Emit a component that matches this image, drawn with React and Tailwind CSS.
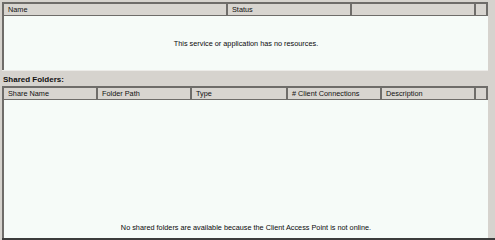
import React from "react";

const topColumns = [
  { label: "Name", width: "w-[224px]" },
  { label: "Status", width: "w-[124px]" },
  { label: "", width: "w-[124px]" },
  { label: "", width: "flex-1" },
];

const shareColumns = [
  { label: "Share Name", width: "w-[94px]" },
  { label: "Folder Path", width: "w-[94px]" },
  { label: "Type", width: "w-[96px]" },
  { label: "# Client Connections", width: "w-[94px]" },
  { label: "Description", width: "w-[94px]" },
  { label: "", width: "flex-1" },
];

function HeaderRow({ columns }) {
  return (
    <div className="flex h-[11px] bg-[#d8d5d0]">
      {columns.map((col, i) => (
        <div
          key={i}
          className={`${col.width} flex items-center border-r-2 border-r-[#6f6d6a] px-[4px] text-[7.3px] leading-none text-[#111]`}
        >
          {col.label}
        </div>
      ))}
    </div>
  );
}

function ListPanel({ columns, message, bodyClass, messageClass }) {
  return (
    <div className="flex w-[486px] flex-col border-l-2 border-t-2 border-[#6e6c69] bg-[#f6fbf8]">
      <HeaderRow columns={columns} />
      <div className="h-[1px] bg-[#6e6c69]" />
      <div className={`flex flex-col items-center ${bodyClass}`}>
        <p className={`text-[7.3px] leading-none text-[#0a0a0a] ${messageClass}`}>
          {message}
        </p>
      </div>
    </div>
  );
}

export default function App() {
  return (
    <div
      className="relative flex h-[240px] w-[495px] overflow-hidden bg-[#d6d3ce]"
      style={{ fontFamily: '"Liberation Sans", Arial, sans-serif' }}
    >
      <div className="ml-[2px] flex flex-col pt-[2px]">
        <ListPanel
          columns={topColumns}
          message="This service or application has no resources."
          bodyClass="h-[54px]"
          messageClass="mt-[24px]"
        />
        <div className="h-[1px] w-[486px] bg-[#ecebe8]" />
        <div className="mt-[5px] h-[10px] pl-[1px] text-[8px] font-bold leading-none text-[#111]">
          Shared Folders:
        </div>
        <div className="mt-[2px]">
          <ListPanel
            columns={shareColumns}
            message="No shared folders are available because the Client Access Point is not online."
            bodyClass="h-[138px] justify-end"
            messageClass="mb-[7px]"
          />
        </div>
        <div className="h-[2px] w-[495px] bg-[#3c3c3c]" />
      </div>
      <div className="ml-[1px] flex h-[238px] w-[6px] gap-[1px] bg-[#c9c6c1]">
        <div className="w-[1px] bg-[#b3b0ab]" />
        <div className="w-[1px] bg-[#e4e2de]" />
        <div className="w-[1px] bg-[#b3b0ab]" />
      </div>
    </div>
  );
}
